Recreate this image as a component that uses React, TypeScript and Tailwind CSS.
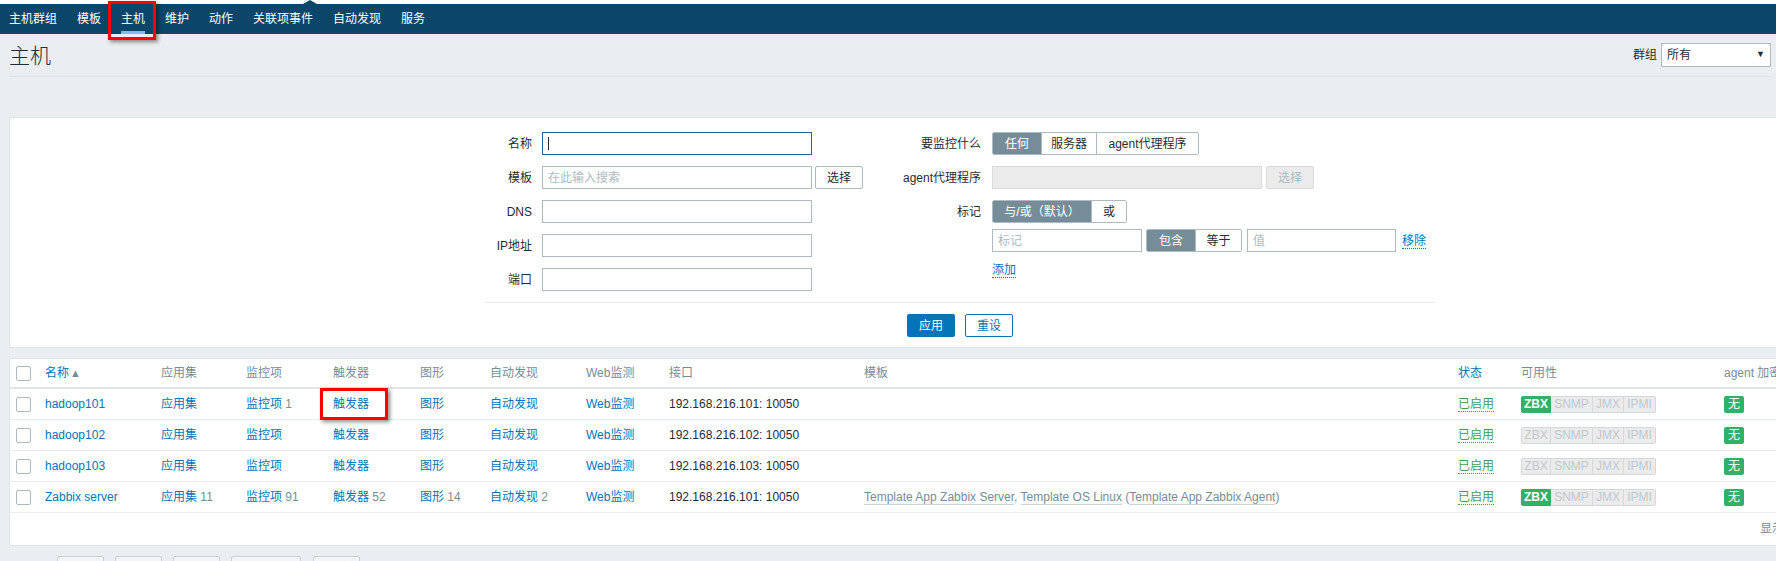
import React from 'react';

const navItems = ['主机群组', '模板', '主机', '维护', '动作', '关联项事件', '自动发现', '服务'];

const cols = 'grid grid-cols-[35px_116px_85px_87px_87px_70px_96px_83px_195px_594px_63px_203px_90px_1fr]';

type Host = {
  name: string;
  ip: string;
  counts: (string | null)[];
  zbx: boolean;
  templates?: boolean;
};

const hosts: Host[] = [
  { name: 'hadoop101', ip: '192.168.216.101', counts: [null, '1', null, null, null], zbx: true },
  { name: 'hadoop102', ip: '192.168.216.102', counts: [null, null, null, null, null], zbx: false },
  { name: 'hadoop103', ip: '192.168.216.103', counts: [null, null, null, null, null], zbx: false },
  { name: 'Zabbix server', ip: '192.168.216.101', counts: ['11', '91', '52', '14', '2'], zbx: true, templates: true },
];

function Checkbox() {
  return <div className="w-[15px] h-[15px] border border-[#acbbc2] rounded-[2px] bg-white" />;
}

function TextInput({ w, placeholder, focused, disabled }: { w: string; placeholder?: string; focused?: boolean; disabled?: boolean }) {
  return (
    <div
      className={`${w} h-[23px] border flex items-center px-[5px] ${
        disabled ? 'bg-[#ebebeb] border-[#dadada]' : focused ? 'bg-white border-[#1c6596]' : 'bg-white border-[#acbbc2]'
      }`}
    >
      {focused && <div className="w-px h-[13px] bg-[#1f2c33]" />}
      {placeholder && <span className="text-[#acbbc2]">{placeholder}</span>}
    </div>
  );
}

function Segmented({ items }: { items: { label: string; w: string; active?: boolean }[] }) {
  return (
    <div className="flex h-[23px] border border-[#acbbc2] rounded-[2px] overflow-hidden">
      {items.map((it, i) => (
        <div
          key={i}
          className={`${it.w} flex items-center justify-center ${i > 0 ? 'border-l border-[#acbbc2]' : ''} ${
            it.active ? 'bg-[#768d99] text-white' : 'bg-white text-[#1f2c33]'
          }`}
        >
          {it.label}
        </div>
      ))}
    </div>
  );
}

function Link({ children }: { children: React.ReactNode }) {
  return <span className="text-[#0275b8]">{children}</span>;
}

function DottedLink({ children }: { children: React.ReactNode }) {
  return <span className="text-[#0275b8] border-b border-dotted border-[#0275b8] leading-[14px]">{children}</span>;
}

function Count({ label, n }: { label: string; n: string | null }) {
  return (
    <span>
      <Link>{label}</Link>
      {n && <span className="text-[#768d99]"> {n}</span>}
    </span>
  );
}

function Availability({ zbx }: { zbx: boolean }) {
  const grey = 'bg-[#ebebeb] text-[#bfc9ce] border-[#d4d9dc]';
  return (
    <div className="flex h-[17px] text-[12px] leading-[15px]">
      <span className={`w-[30px] text-center border rounded-l-[2px] ${zbx ? 'bg-[#34af67] border-[#34af67] text-white font-bold' : grey}`}>ZBX</span>
      <span className={`w-[42px] text-center border border-l-0 ${grey}`}>SNMP</span>
      <span className={`w-[31px] text-center border border-l-0 ${grey}`}>JMX</span>
      <span className={`w-[32px] text-center border border-l-0 rounded-r-[2px] ${grey}`}>IPMI</span>
    </div>
  );
}

export default function App() {
  return (
    <div className="relative w-[1776px] h-[561px] overflow-hidden bg-[#ebeef0] text-[12px] text-[#1f2c33] font-['Liberation_Sans','Noto_Sans_CJK_SC',sans-serif]">
      {/* top strip with menu arrow */}
      <div className="relative h-[4px] bg-white">
        <div className="absolute left-[303px] top-0 w-0 h-0 border-x-[7px] border-x-transparent border-b-[4px] border-b-[#0a466a]" />
      </div>

      {/* sub navigation */}
      <div className="h-[30px] bg-[#0a466a] flex items-stretch pl-[9px] gap-[20px]">
        {navItems.map((item, i) => (
          <div key={item} className="relative flex items-center text-white">
            {item}
            {i === 2 && <div className="absolute left-0 right-0 bottom-0 h-[3px] bg-[#7cbcea]" />}
          </div>
        ))}
      </div>

      {/* page header */}
      <div className="ml-[9px] mr-[5px] h-[43px] border-b border-[#dde3e6] flex items-center justify-between">
        <h1 className="text-[21px] font-light pt-[2px]">主机</h1>
        <div className="flex items-center gap-[4px]">
          <span>群组</span>
          <div className="w-[110px] h-[24px] border border-[#acbbc2] bg-white flex items-center justify-between px-[5px]">
            <span>所有</span>
            <span className="text-[9px]">▼</span>
          </div>
        </div>
      </div>

      {/* filter panel */}
      <div className="ml-[9px] mt-[40px] w-[1902px] bg-white border border-[#dfe4e7]">
        <div className="flex justify-center pt-[14px]">
          <div className="w-[950px]">
            <div className="flex">
              <div className="w-[395px] flex flex-col gap-[11px]">
                {['名称', '模板', 'DNS', 'IP地址', '端口'].map((label, i) => (
                  <div key={label} className="flex items-center h-[23px]">
                    <div className="w-[47px] text-right">{label}</div>
                    <div className="ml-[10px]">
                      <TextInput w="w-[270px]" focused={i === 0} placeholder={i === 1 ? '在此输入搜索' : undefined} />
                    </div>
                    {i === 1 && (
                      <div className="ml-[3px] w-[48px] h-[23px] border border-[#acbbc2] rounded-[2px] flex items-center justify-center">选择</div>
                    )}
                  </div>
                ))}
              </div>

              <div className="flex flex-col">
                <div className="flex items-center h-[23px]">
                  <div className="w-[101px] text-right">要监控什么</div>
                  <div className="ml-[11px]">
                    <Segmented
                      items={[
                        { label: '任何', w: 'w-[48px]', active: true },
                        { label: '服务器', w: 'w-[55px]' },
                        { label: 'agent代理程序', w: 'w-[102px]' },
                      ]}
                    />
                  </div>
                </div>
                <div className="flex items-center h-[23px] mt-[11px]">
                  <div className="w-[101px] text-right">agent代理程序</div>
                  <div className="ml-[11px]">
                    <TextInput w="w-[270px]" disabled />
                  </div>
                  <div className="ml-[4px] w-[48px] h-[23px] border border-[#dadada] bg-[#ebebeb] text-[#acbbc2] rounded-[2px] flex items-center justify-center">选择</div>
                </div>
                <div className="flex items-center h-[23px] mt-[11px]">
                  <div className="w-[101px] text-right">标记</div>
                  <div className="ml-[11px]">
                    <Segmented
                      items={[
                        { label: '与/或（默认）', w: 'w-[98px]', active: true },
                        { label: '或', w: 'w-[35px]' },
                      ]}
                    />
                  </div>
                </div>
                <div className="flex items-center h-[23px] mt-[6px] pl-[112px]">
                  <TextInput w="w-[150px]" placeholder="标记" />
                  <div className="ml-[4px]">
                    <Segmented
                      items={[
                        { label: '包含', w: 'w-[48px]', active: true },
                        { label: '等于', w: 'w-[46px]' },
                      ]}
                    />
                  </div>
                  <div className="ml-[5px]">
                    <TextInput w="w-[149px]" placeholder="值" />
                  </div>
                  <div className="ml-[6px]">
                    <DottedLink>移除</DottedLink>
                  </div>
                </div>
                <div className="mt-[9px] pl-[112px]">
                  <DottedLink>添加</DottedLink>
                </div>
              </div>
            </div>

            <div className="mt-[11px] border-t border-[#e6eaec] pt-[11px] pb-[10px] flex justify-center gap-[10px]">
              <div className="w-[48px] h-[23px] bg-[#0275b8] text-white rounded-[2px] flex items-center justify-center">应用</div>
              <div className="w-[48px] h-[23px] border border-[#0275b8] text-[#0275b8] rounded-[2px] flex items-center justify-center">重设</div>
            </div>
          </div>
        </div>
      </div>

      {/* hosts table */}
      <div className="ml-[9px] mt-[10px] w-[1902px] bg-white border border-[#dfe4e7]">
        <div className={`${cols} h-[30px] items-center border-b-2 border-[#dfe4e7] text-[#768d99]`}>
          <div className="pl-[6px]"><Checkbox /></div>
          <div className="text-[#0275b8]">名称<span className="text-[#768d99] text-[11px] ml-[1px]">▲</span></div>
          <div>应用集</div>
          <div>监控项</div>
          <div>触发器</div>
          <div>图形</div>
          <div>自动发现</div>
          <div>Web监测</div>
          <div>接口</div>
          <div>模板</div>
          <div className="text-[#0275b8]">状态</div>
          <div>可用性</div>
          <div>agent 加密</div>
          <div>信息</div>
        </div>

        {hosts.map((h) => (
          <div key={h.name} className={`${cols} h-[31px] items-center border-b border-[#ebeef0]`}>
            <div className="pl-[6px]"><Checkbox /></div>
            <div><Link>{h.name}</Link></div>
            <div><Count label="应用集" n={h.counts[0]} /></div>
            <div><Count label="监控项" n={h.counts[1]} /></div>
            <div><Count label="触发器" n={h.counts[2]} /></div>
            <div><Count label="图形" n={h.counts[3]} /></div>
            <div><Count label="自动发现" n={h.counts[4]} /></div>
            <div><Link>Web监测</Link></div>
            <div>{h.ip}: 10050</div>
            <div className="text-[#768d99]">
              {h.templates && (
                <span>
                  <span className="border-b border-[#ccd5d9]">Template App Zabbix Server</span>,{' '}
                  <span className="border-b border-[#ccd5d9]">Template OS Linux</span> (
                  <span className="border-b border-[#ccd5d9]">Template App Zabbix Agent</span>)
                </span>
              )}
            </div>
            <div>
              <span className="text-[#429e47] border-b border-dotted border-[#429e47] leading-[14px]">已启用</span>
            </div>
            <div><Availability zbx={h.zbx} /></div>
            <div>
              <span className="inline-flex w-[20px] h-[17px] bg-[#34af67] text-white rounded-[2px] items-center justify-center">无</span>
            </div>
            <div />
          </div>
        ))}

        <div className="h-[32px] flex items-center justify-end pr-[10px] text-[#768d99]">显示 已自动发现的 4中的4</div>
      </div>

      {/* mass action buttons */}
      <div className="flex items-start mt-[10px] pl-[57px]">
        {[
          { label: '启用', w: 'w-[47px]', ml: '' },
          { label: '禁用', w: 'w-[47px]', ml: 'ml-[11px]' },
          { label: '导出', w: 'w-[47px]', ml: 'ml-[11px]' },
          { label: '批量更新', w: 'w-[70px]', ml: 'ml-[11px]' },
          { label: '删除', w: 'w-[47px]', ml: 'ml-[12px]' },
        ].map((b) => (
          <div key={b.label} className={`${b.w} ${b.ml} h-[24px] border border-[#c9d1d6] bg-[#f2f4f5] rounded-[2px] flex items-center justify-center text-[#acbbc2]`}>
            {b.label}
          </div>
        ))}
      </div>

      {/* annotation boxes */}
      <div className="absolute left-[108px] top-[1px] w-[48px] h-[39px] border-[3px] border-[#ff0000] shadow-[2px_2px_4px_rgba(0,0,0,0.45)]" />
      <div className="absolute left-[320px] top-[388px] w-[68px] h-[32px] border-[3px] border-[#ff0000] shadow-[2px_2px_4px_rgba(0,0,0,0.45)]" />
    </div>
  );
}
